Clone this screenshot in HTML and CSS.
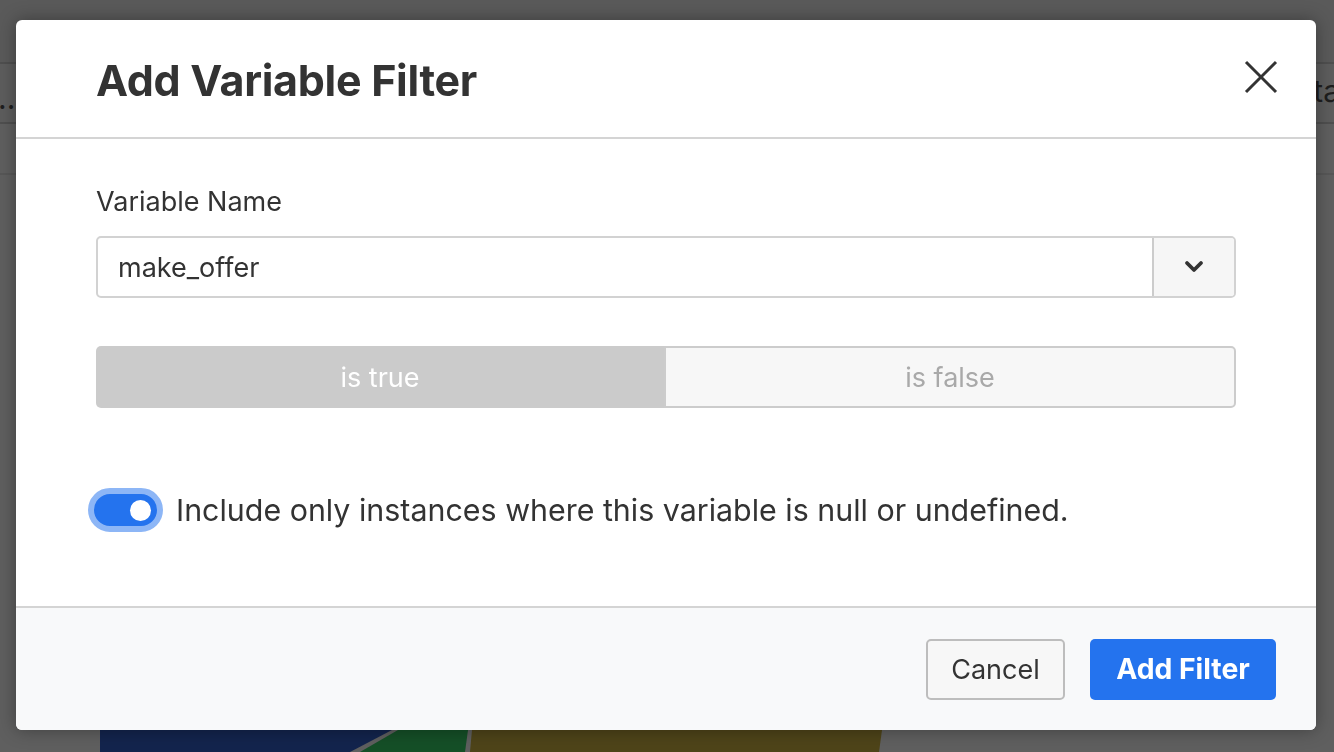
FILE: index.html
```html
<!DOCTYPE html>
<html>
<head>
<meta charset="utf-8">
<link rel="stylesheet" href="styles.css">
</head>
<body>
<div class="page">
  <div class="topbar"></div>
  <div class="subbar"><span class="dots">..</span><span class="tail">ta</span></div>
  <div class="toolbar"></div>
  <svg class="chart" width="1334" height="752" viewBox="0 0 1334 752">
    <path d="M100 752 L100 730 L392 730 L350 752 Z" fill="#13244d"/>
    <path d="M360 752 L398 730 L468 730 L465 752 Z" fill="#154f27"/>
    <path d="M472 730 L882 730 L879 752 L470 752 Z" fill="#4e4419"/>
  </svg>
</div>
<div class="overlay">
  <div class="modal">
    <div class="modal-header">
      <h1 class="title">Add Variable Filter</h1>
      <button class="close" aria-label="Close">
        <svg width="34" height="34" viewBox="0 0 34 34"><path d="M2 2 L32 32 M32 2 L2 32" stroke="#333" stroke-width="3" fill="none"/></svg>
      </button>
    </div>
    <div class="modal-body">
      <label class="label">Variable Name</label>
      <div class="select">
        <div class="select-value">make_offer</div>
        <div class="select-btn">
          <svg width="20" height="14" viewBox="0 0 20 14"><path d="M3 3 L10 10 L17 3" stroke="#333" stroke-width="3.8" fill="none" stroke-linecap="round" stroke-linejoin="round"/></svg>
        </div>
      </div>
      <div class="segmented">
        <div class="seg seg-on">is true</div>
        <div class="seg seg-off">is false</div>
      </div>
      <div class="toggle-row">
        <div class="toggle"><div class="knob"></div></div>
        <span class="toggle-text">Include only instances where this variable is null or undefined.</span>
      </div>
    </div>
    <div class="modal-footer">
      <button class="btn btn-cancel">Cancel</button>
      <button class="btn btn-primary">Add Filter</button>
    </div>
  </div>
</div>
</body>
</html>
```
FILE: styles.css
```css
* { box-sizing: border-box; }
html, body { margin: 0; padding: 0; }
body {
  width: 1334px;
  height: 752px;
  overflow: hidden;
  background: #5f5f5f;
  font-family: Inter, "Noto Sans", "Liberation Sans", sans-serif;
  color: #333;
}
.page { position: relative; width: 1334px; height: 752px; }
.topbar { height: 64px; background: #5a5a5a; border-bottom: 2px solid #4f4f4f; }
.subbar {
  height: 60px;
  background: #5d5d5d;
  border-bottom: 2px solid #4f4f4f;
  display: flex;
  justify-content: space-between;
  align-items: center;
  font-size: 30px;
  color: #1e1e1e;
}
.dots { margin-left: -2px; margin-top: 10px; }
.tail { margin-right: -6px; margin-top: -4px; }
.toolbar { height: 51px; border-bottom: 2px solid #575757; }
.chart { position: absolute; left: 0; top: 0; }
.overlay {
  position: fixed;
  inset: 0;
  padding: 20px 18px 22px 16px;
  display: flex;
}
.modal {
  flex: 1;
  background: #fff;
  border-radius: 6px;
  box-shadow: 0 0 18px rgba(0,0,0,0.35);
  display: flex;
  flex-direction: column;
  overflow: hidden;
}
.modal-header {
  height: 119px;
  border-bottom: 2px solid #d4d4d4;
  display: flex;
  align-items: center;
  justify-content: space-between;
  padding: 0 38px 0 80px;
}
.title {
  margin: 0;
  font-size: 43px;
  font-weight: 700;
  color: #333;
  letter-spacing: -0.3px;
  margin-top: 3px;
}
.close {
  border: 0;
  background: none;
  padding: 0;
  width: 34px;
  height: 34px;
  margin-top: -4px;
  cursor: pointer;
}
.modal-body {
  flex: 1;
  padding: 47px 80px 0 80px;
  display: flex;
  flex-direction: column;
}
.label {
  font-size: 27px;
  line-height: 32px;
  color: #333;
  margin-bottom: 18px;
}
.select {
  display: flex;
  height: 62px;
  border: 2px solid #d2d2d2;
  border-radius: 5px;
  overflow: hidden;
}
.select-value {
  flex: 1;
  font-size: 27px;
  padding-left: 20px;
  display: flex;
  align-items: center;
  color: #333;
}
.select-btn {
  width: 82px;
  background: #f6f6f6;
  border-left: 2px solid #cccccc;
  display: flex;
  align-items: center;
  justify-content: center;
}
.segmented {
  display: flex;
  height: 62px;
  margin-top: 48px;
}
.seg {
  flex: 1;
  display: flex;
  align-items: center;
  justify-content: center;
  font-size: 27px;
}
.seg-on {
  background: #cbcbcb;
  color: #fff;
  border-radius: 5px 0 0 5px;
}
.seg-off {
  background: #f7f7f7;
  color: #a9a9a9;
  border: 2px solid #cccccc;
  border-radius: 0 5px 5px 0;
}
.toggle-row {
  display: flex;
  align-items: center;
  margin-top: 80px;
  margin-left: -8px;
  gap: 13px;
}
.toggle {
  width: 75px;
  height: 44px;
  border-radius: 22px;
  background: #2473ee;
  border: 6px solid #8db6f6;
  display: flex;
  align-items: center;
  justify-content: flex-end;
  padding-right: 6px;
}
.knob {
  width: 21px;
  height: 21px;
  border-radius: 50%;
  background: #fff;
}
.toggle-text {
  font-size: 30.4px;
  color: #333;
  margin-top: -1px;
}
.modal-footer {
  height: 124px;
  border-top: 2px solid #d4d4d4;
  background: #f8f9fa;
  display: flex;
  align-items: center;
  justify-content: flex-end;
  gap: 25px;
  padding: 0 40px 0 0;
}
.btn {
  height: 61px;
  border-radius: 5px;
  font-family: inherit;
  font-size: 27px;
  cursor: pointer;
}
.btn-cancel {
  width: 139px;
  background: #f7f7f7;
  border: 2px solid #bdbdbd;
  color: #333;
}
.btn-primary {
  width: 186px;
  background: #2473ee;
  border: 0;
  color: #fff;
  font-weight: 700;
  font-size: 28.3px;
}
```
